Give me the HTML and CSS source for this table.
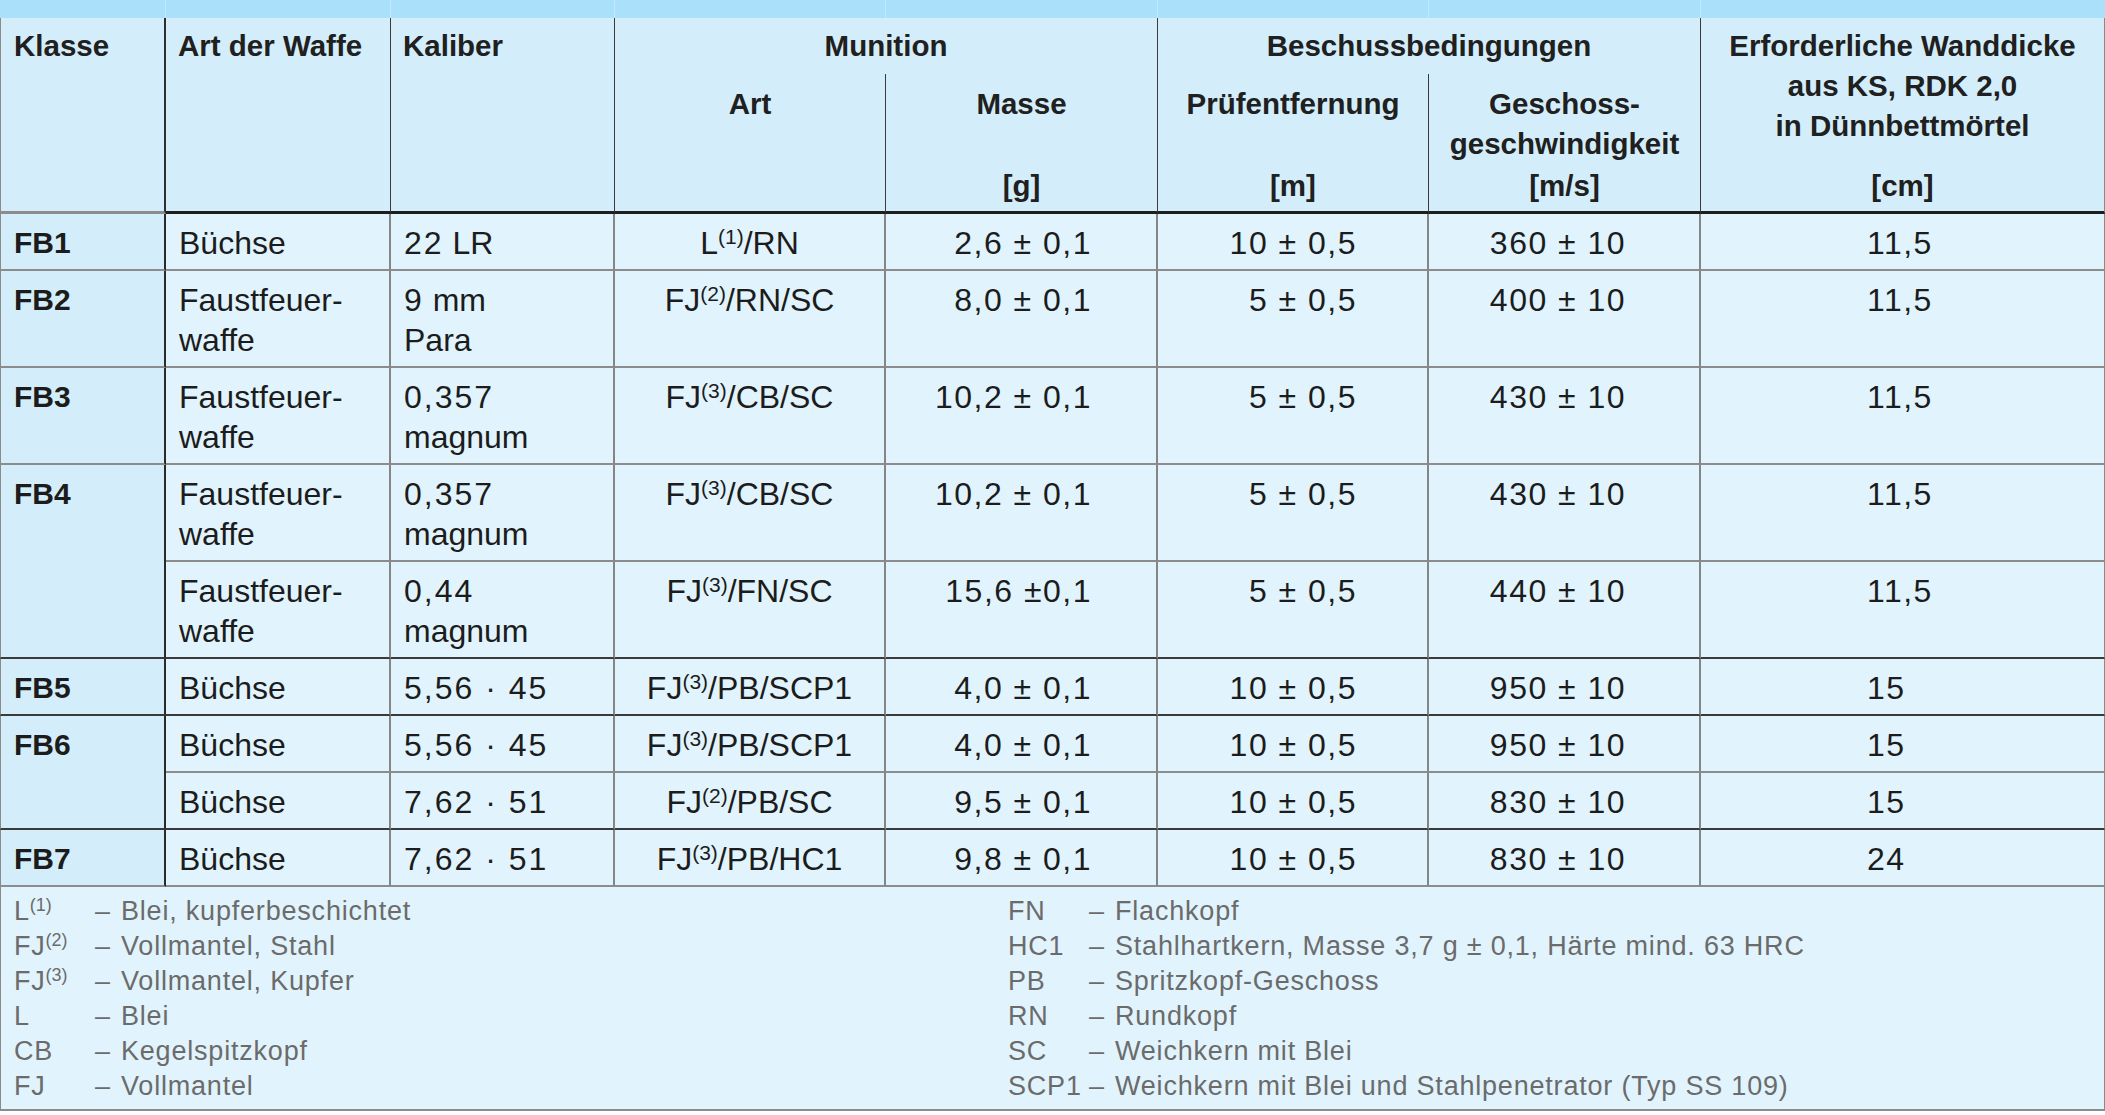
FILE: index.html
```html
<!DOCTYPE html>
<html lang="de">
<head>
<meta charset="utf-8">
<title>Beschussklassen FB1–FB7</title>
<link rel="stylesheet" href="styles.css">
</head>
<body>
<div class="table">
  <div class="band"></div><div class="band"></div><div class="band"></div><div class="band"></div>
  <div class="band"></div><div class="band"></div><div class="band"></div><div class="band band-last"></div>

  <div class="th th-span th-first">Klasse</div>
  <div class="th th-span">Art der Waffe</div>
  <div class="th th-span">Kaliber</div>
  <div class="th th-group">Munition</div>
  <div class="th th-group">Beschussbedingungen</div>
  <div class="th th-span th-stack th-last">
    <div>Erforderliche Wanddicke<br>aus KS, RDK 2,0<br>in Dünnbettmörtel</div>
    <div>[cm]</div>
  </div>

  <div class="th th-sub th-stack"><div>Art</div><div></div></div>
  <div class="th th-sub th-stack"><div>Masse</div><div>[g]</div></div>
  <div class="th th-sub th-stack"><div>Prüfentfernung</div><div>[m]</div></div>
  <div class="th th-sub th-stack"><div>Geschoss-<br>geschwindigkeit</div><div>[m/s]</div></div>

  <!-- FB1 -->
  <div class="td td-k">FB1</div>
  <div class="td">Büchse</div>
  <div class="td"><span class="num">22</span> LR</div>
  <div class="td c-art">L<sup class="fn">(1)</sup>/RN</div>
  <div class="td c-masse">2,6 ± 0,1</div>
  <div class="td c-pruef">10 ± 0,5</div>
  <div class="td c-geschw">360 ± 10</div>
  <div class="td c-wand">11,5</div>

  <!-- FB2 -->
  <div class="td td-k">FB2</div>
  <div class="td">Faustfeuer-<br>waffe</div>
  <div class="td"><span class="num">9</span> mm<br>Para</div>
  <div class="td c-art">FJ<sup class="fn">(2)</sup>/RN/SC</div>
  <div class="td c-masse">8,0 ± 0,1</div>
  <div class="td c-pruef">5 ± 0,5</div>
  <div class="td c-geschw">400 ± 10</div>
  <div class="td c-wand">11,5</div>

  <!-- FB3 -->
  <div class="td td-k">FB3</div>
  <div class="td">Faustfeuer-<br>waffe</div>
  <div class="td"><span class="num">0,357</span><br>magnum</div>
  <div class="td c-art">FJ<sup class="fn">(3)</sup>/CB/SC</div>
  <div class="td c-masse">10,2 ± 0,1</div>
  <div class="td c-pruef">5 ± 0,5</div>
  <div class="td c-geschw">430 ± 10</div>
  <div class="td c-wand">11,5</div>

  <!-- FB4 -->
  <div class="td td-k span2 sep">FB4</div>
  <div class="td">Faustfeuer-<br>waffe</div>
  <div class="td"><span class="num">0,357</span><br>magnum</div>
  <div class="td c-art">FJ<sup class="fn">(3)</sup>/CB/SC</div>
  <div class="td c-masse">10,2 ± 0,1</div>
  <div class="td c-pruef">5 ± 0,5</div>
  <div class="td c-geschw">430 ± 10</div>
  <div class="td c-wand">11,5</div>

  <div class="td sep">Faustfeuer-<br>waffe</div>
  <div class="td sep"><span class="num">0,44</span><br>magnum</div>
  <div class="td sep c-art">FJ<sup class="fn">(3)</sup>/FN/SC</div>
  <div class="td sep c-masse">15,6 ±0,1</div>
  <div class="td sep c-pruef">5 ± 0,5</div>
  <div class="td sep c-geschw">440 ± 10</div>
  <div class="td sep c-wand">11,5</div>

  <!-- FB5 -->
  <div class="td td-k sep">FB5</div>
  <div class="td sep">Büchse</div>
  <div class="td sep"><span class="num">5,56 · 45</span></div>
  <div class="td sep c-art">FJ<sup class="fn">(3)</sup>/PB/SCP1</div>
  <div class="td sep c-masse">4,0 ± 0,1</div>
  <div class="td sep c-pruef">10 ± 0,5</div>
  <div class="td sep c-geschw">950 ± 10</div>
  <div class="td sep c-wand">15</div>

  <!-- FB6 -->
  <div class="td td-k span2 sep">FB6</div>
  <div class="td">Büchse</div>
  <div class="td"><span class="num">5,56 · 45</span></div>
  <div class="td c-art">FJ<sup class="fn">(3)</sup>/PB/SCP1</div>
  <div class="td c-masse">4,0 ± 0,1</div>
  <div class="td c-pruef">10 ± 0,5</div>
  <div class="td c-geschw">950 ± 10</div>
  <div class="td c-wand">15</div>

  <div class="td sep">Büchse</div>
  <div class="td sep"><span class="num">7,62 · 51</span></div>
  <div class="td sep c-art">FJ<sup class="fn">(2)</sup>/PB/SC</div>
  <div class="td sep c-masse">9,5 ± 0,1</div>
  <div class="td sep c-pruef">10 ± 0,5</div>
  <div class="td sep c-geschw">830 ± 10</div>
  <div class="td sep c-wand">15</div>

  <!-- FB7 -->
  <div class="td td-k">FB7</div>
  <div class="td">Büchse</div>
  <div class="td"><span class="num">7,62 · 51</span></div>
  <div class="td c-art">FJ<sup class="fn">(3)</sup>/PB/HC1</div>
  <div class="td c-masse">9,8 ± 0,1</div>
  <div class="td c-pruef">10 ± 0,5</div>
  <div class="td c-geschw">830 ± 10</div>
  <div class="td c-wand">24</div>

  <div class="legend">
    <dl class="leg-list">
      <dt>L<sup class="lfn">(1)</sup></dt><dd><span class="dash">–</span>Blei, kupferbeschichtet</dd>
      <dt>FJ<sup class="lfn">(2)</sup></dt><dd><span class="dash">–</span>Vollmantel, Stahl</dd>
      <dt>FJ<sup class="lfn">(3)</sup></dt><dd><span class="dash">–</span>Vollmantel, Kupfer</dd>
      <dt>L</dt><dd><span class="dash">–</span>Blei</dd>
      <dt>CB</dt><dd><span class="dash">–</span>Kegelspitzkopf</dd>
      <dt>FJ</dt><dd><span class="dash">–</span>Vollmantel</dd>
    </dl>
    <dl class="leg-list">
      <dt>FN</dt><dd><span class="dash">–</span>Flachkopf</dd>
      <dt>HC1</dt><dd><span class="dash">–</span>Stahlhartkern, Masse 3,7 g ± 0,1, Härte mind. 63 HRC</dd>
      <dt>PB</dt><dd><span class="dash">–</span>Spritzkopf-Geschoss</dd>
      <dt>RN</dt><dd><span class="dash">–</span>Rundkopf</dd>
      <dt>SC</dt><dd><span class="dash">–</span>Weichkern mit Blei</dd>
      <dt>SCP1</dt><dd><span class="dash">–</span>Weichkern mit Blei und Stahlpenetrator (Typ SS 109)</dd>
    </dl>
  </div>
</div>
</body>
</html>
```

FILE: styles.css
```css
* {
  box-sizing: border-box;
}

body {
  margin: 0;
  background: #ffffff;
  font-family: "Liberation Sans", Arial, sans-serif;
  color: #1c1c1c;
}

.table {
  display: grid;
  grid-template-columns: 166px 225px 224px 271px 272px 271px 272px 404px;
  grid-template-rows: 18px 56px 140px;
  width: 2105px;
}

/* top colour band */
.band {
  background: #abe0fa;
  border-right: 1px solid #c2e9fb;
}

.band-last {
  border-right: none;
}

/* header */
.th {
  background: #d3eefa;
  font-weight: 700;
  font-size: 29.5px;
  line-height: 40px;
  padding: 8px 10px 0 12px;
  border-right: 1px solid #3a3a3a;
  white-space: nowrap;
  color: #202020;
}

.th-span {
  grid-row: span 2;
  border-bottom: 3px solid #1e1e1e;
}

.th-first {
  border-left: 1px solid #8a8a8a;
  border-right: 2px solid #2e2e2e;
  border-bottom: 3px solid #8c8c8c;
  padding-left: 13px;
}

.th-group {
  grid-column: span 2;
  text-align: center;
  padding-left: 0;
  padding-right: 0;
}

.th-stack {
  display: flex;
  flex-direction: column;
  justify-content: space-between;
  text-align: center;
  padding-left: 0;
  padding-right: 0;
  padding-bottom: 5px;
}

.th-sub {
  padding-top: 10px;
  border-bottom: 3px solid #1e1e1e;
}

.th-last {
  border-right: 1px solid #8a8a8a;
}

/* body cells */
.td {
  background: #e1f4fd;
  font-size: 32px;
  line-height: 40px;
  padding: 9px 10px 6px 13px;
  border-right: 2px solid #858585;
  border-bottom: 2px solid #8c8c8c;
  white-space: nowrap;
}

.td-k {
  background: #d3eefa;
  font-weight: 700;
  font-size: 30px;
  border-left: 1px solid #8a8a8a;
  border-right: 2px solid #2a2a2a;
}

.span2 {
  grid-row: span 2;
}

.sep {
  border-bottom-color: #3a3a3a;
}

.num {
  letter-spacing: 2px;
}

.c-art {
  text-align: center;
  padding-left: 0;
  padding-right: 0;
}

.c-masse {
  text-align: right;
  padding-right: 64px;
  letter-spacing: 1.5px;
}

.c-pruef {
  text-align: right;
  padding-right: 70px;
  letter-spacing: 1.5px;
}

.c-geschw {
  text-align: center;
  padding-left: 0;
  padding-right: 12px;
  letter-spacing: 1.5px;
}

.c-wand {
  padding-left: 166px;
  border-right: 1px solid #8a8a8a;
  letter-spacing: 1.5px;
}

.fn {
  font-size: 21px;
  line-height: 0;
  vertical-align: 10px;
  letter-spacing: 0;
}

/* legend */
.legend {
  grid-column: 1 / -1;
  display: grid;
  grid-template-columns: 994px 1fr;
  background: #e1f4fd;
  border-left: 1px solid #8a8a8a;
  border-right: 1px solid #8a8a8a;
  border-bottom: 2px solid #8c8c8c;
  padding: 7px 0 5px 13px;
  font-size: 27px;
  line-height: 35px;
  color: #6b6b6b;
  letter-spacing: 0.8px;
}

.leg-list {
  display: grid;
  grid-template-columns: 81px 1fr;
  margin: 0;
}

.leg-list dt,
.leg-list dd {
  margin: 0;
  white-space: nowrap;
}

.dash {
  display: inline-block;
  width: 26px;
}

.lfn {
  font-size: 18px;
  line-height: 0;
  vertical-align: 9px;
  letter-spacing: 0;
}
```
